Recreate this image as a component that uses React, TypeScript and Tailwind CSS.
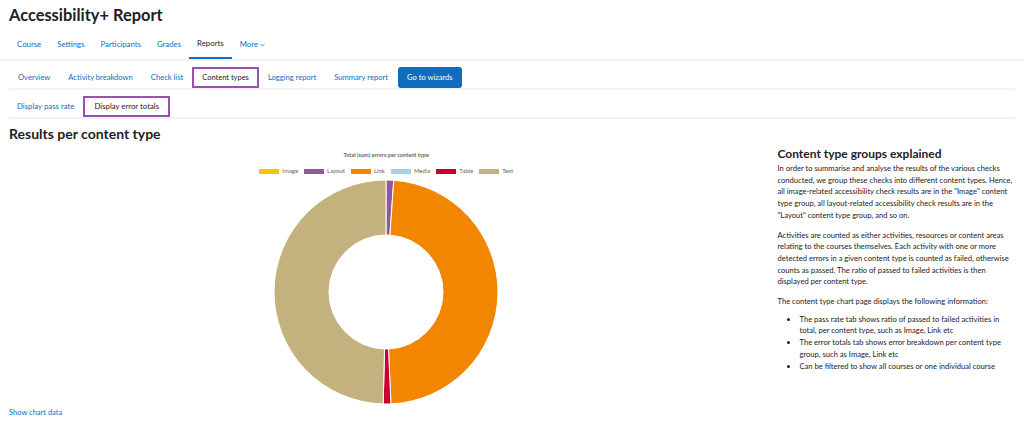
import React from 'react';

const FONT = { fontFamily: 'Lato, "Open Sans", Arial, sans-serif' };

interface Slice {
  name: string;
  value: number;
  color: string;
}

const SLICES: Slice[] = [
  { name: 'Image', value: 0, color: '#f6c400' },
  { name: 'Layout', value: 1.1, color: '#8d5a9c' },
  { name: 'Link', value: 48.2, color: '#f38600' },
  { name: 'Media', value: 0, color: '#a8cdf1' },
  { name: 'Table', value: 1.1, color: '#c8002f' },
  { name: 'Text', value: 49.6, color: '#c4b27e' },
];

const primaryNav = ['Course', 'Settings', 'Participants', 'Grades', 'Reports'];
const secondaryNav = ['Overview', 'Activity breakdown', 'Check list', 'Content types', 'Logging report', 'Summary report'];

function polar(cx: number, cy: number, r: number, deg: number) {
  const a = ((deg - 90) * Math.PI) / 180;
  return [cx + r * Math.cos(a), cy + r * Math.sin(a)];
}

function arcPath(cx: number, cy: number, r0: number, r1: number, a0: number, a1: number) {
  const large = a1 - a0 > 180 ? 1 : 0;
  const [x0, y0] = polar(cx, cy, r1, a0);
  const [x1, y1] = polar(cx, cy, r1, a1);
  const [x2, y2] = polar(cx, cy, r0, a1);
  const [x3, y3] = polar(cx, cy, r0, a0);
  return `M${x0} ${y0} A${r1} ${r1} 0 ${large} 1 ${x1} ${y1} L${x2} ${y2} A${r0} ${r0} 0 ${large} 0 ${x3} ${y3} Z`;
}

function Donut() {
  const total = SLICES.reduce((s, d) => s + d.value, 0);
  let start = 0;
  return (
    <svg width="228" height="228" viewBox="0 0 228 228">
      {SLICES.filter((d) => d.value > 0).map((d) => {
        const sweep = (d.value / total) * 360;
        const p = arcPath(114, 114, 57, 112, start, start + sweep);
        start += sweep;
        return <path key={d.name} d={p} fill={d.color} stroke="#ffffff" strokeWidth="1" />;
      })}
    </svg>
  );
}

export default function App() {
  return (
    <div className="w-[1024px] h-[433px] overflow-hidden bg-white text-[#1d2125]" style={FONT}>
      <h1 className="pl-[9px] pt-[3px] text-[16.4px] font-bold leading-[24px]">Accessibility+ Report</h1>

      {/* primary nav */}
      <div className="mt-[4px] flex border-b-2 border-[#f2f2f2] pl-[9px]">
        {primaryNav.map((n) => (
          <div
            key={n}
            className={`px-2 h-[28px] pb-[1px] flex items-center text-[7.8px] ${
              n === 'Reports' ? 'text-[#1d2125] border-b-2 border-[#0f6cbf] -mb-[2px]' : 'text-[#0f6cbf]'
            }`}
          >
            {n}
          </div>
        ))}
        <div className="px-2 h-[28px] pb-[1px] flex items-center gap-[2px] text-[7.8px] text-[#0f6cbf]">
          More
          <svg width="5" height="4" viewBox="0 0 5 4" className="mt-[1px]">
            <path d="M0.5 1 L2.5 3 L4.5 1" fill="none" stroke="#0f6cbf" strokeWidth="0.8" />
          </svg>
        </div>
      </div>

      {/* secondary nav */}
      <div className="mx-[9px] mt-[6px] flex items-center border-b-2 border-[#f2f2f2]">
        {secondaryNav.map((n) =>
          n === 'Content types' ? (
            <div key={n} className="h-[21px] px-[8px] flex items-center text-[7.5px] border-2 border-[#9b4fae]">
              {n}
            </div>
          ) : (
            <div key={n} className="h-[21px] px-[9px] flex items-center text-[7.6px] text-[#0f6cbf]">
              {n}
            </div>
          )
        )}
        <div className="ml-[1px] h-[21px] px-[9px] flex items-center text-[7.6px] text-white bg-[#0f6cbf] rounded-[3px]">
          Go to wizards
        </div>
      </div>

      {/* tertiary nav */}
      <div className="mx-[9px] mt-[6px] flex items-center border-b-2 border-[#f2f2f2]">
        <div className="h-[21px] px-2 flex items-center text-[7.8px] text-[#0f6cbf]">Display pass rate</div>
        <div className="ml-[1px] h-[21px] px-[9px] flex items-center text-[7.8px] border-2 border-[#9b4fae]">Display error totals</div>
      </div>

      <div className="flex px-[9px] mt-[5px]">
        {/* left column */}
        <div className="w-[756px] flex flex-col">
          <h2 className="text-[14px] font-bold leading-[20px]">Results per content type</h2>
          <div className="flex flex-col items-center">
            <div className="mt-[7px] text-[5.6px] font-bold text-[#666666] leading-[8px]">
              Total (sum) errors per content type
            </div>
            <div className="mt-[8px] flex items-center gap-[6px] text-[6px] text-[#666666] leading-[8px]">
              {SLICES.map((s) => (
                <div key={s.name} className="flex items-center gap-[3px]">
                  <span className="inline-block w-[20px] h-[5px]" style={{ backgroundColor: s.color }} />
                  {s.name}
                </div>
              ))}
            </div>
            <div className="mt-[3px]">
              <Donut />
            </div>
          </div>
          <div className="mt-[2px] text-[7.5px] text-[#0f6cbf] leading-[10px]">Show chart data</div>
        </div>

        {/* right column */}
        <div className="ml-[14px] w-[238px] pt-[23px]">
          <h3 className="text-[12px] font-bold leading-[14px]">Content type groups explained</h3>
          <div className="mt-[2px] text-[7.6px] leading-[11.7px] text-[#1d2125]">
            <p>
              In order to summarise and analyse the results of the various checks conducted, we group these checks into
              different content types. Hence, all image-related accessibility check results are in the "Image" content type
              group, all layout-related accessibility check results are in the "Layout" content type group, and so on.
            </p>
            <p className="mt-[8px]">
              Activities are counted as either activities, resources or content areas relating to the courses themselves. Each
              activity with one or more detected errors in a given content type is counted as failed, otherwise counts as
              passed. The ratio of passed to failed activities is then displayed per content type.
            </p>
            <p className="mt-[8px]">The content type chart page displays the following information:</p>
            <ul className="mt-[6px] pl-[22px] list-disc">
              <li>The pass rate tab shows ratio of passed to failed activities in total, per content type, such as Image, Link etc</li>
              <li>The error totals tab shows error breakdown per content type group, such as Image, Link etc</li>
              <li>Can be filtered to show all courses or one individual course</li>
            </ul>
          </div>
        </div>
      </div>
    </div>
  );
}
